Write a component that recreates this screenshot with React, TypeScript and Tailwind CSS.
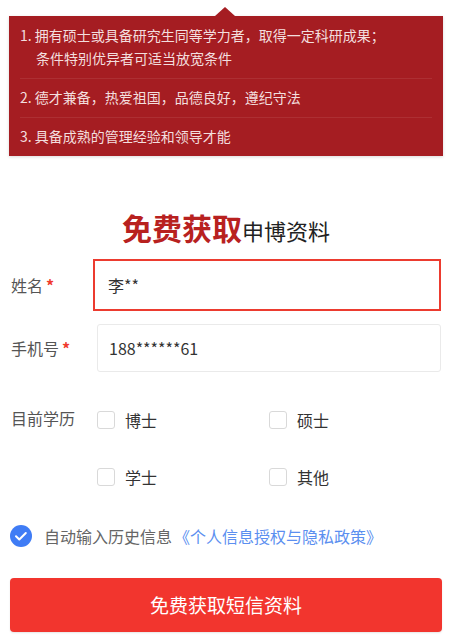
import { useState } from "react";

const font = { fontFamily: '"Noto Sans CJK SC", "Noto Sans", sans-serif' };

function Box({ checked }: { checked: boolean }) {
  return (
    <span
      className={
        "w-[18px] h-[18px] rounded-[3px] border " +
        (checked ? "border-[#3d7bf7] bg-[#3d7bf7]" : "border-[#d9d9d9] bg-white")
      }
    />
  );
}

export default function App() {
  const [edu, setEdu] = useState<string[]>([]);
  const toggle = (v: string) =>
    setEdu((e) => (e.includes(v) ? e.filter((x) => x !== v) : [...e, v]));
  const options = ["博士", "硕士", "学士", "其他"];

  return (
    <div className="w-[452px] h-[643px] bg-white overflow-hidden" style={font}>
      <div className="relative mx-[9px] mt-[16px] bg-[#a51d22] text-[14px] leading-[23px] text-[#f3dede] px-[11px] shadow-[0_1px_3px_rgba(0,0,0,0.15)]">
        <div className="absolute -top-[9px] left-[206px] w-0 h-0 border-l-[10px] border-r-[10px] border-b-[9px] border-l-transparent border-r-transparent border-b-[#a51d22]" />
        <div className="pt-[8px] pb-[8px] border-b border-[#ad2f33]">
          <div>1. 拥有硕士或具备研究生同等学力者，取得一定科研成果；</div>
          <div className="pl-[16px]">条件特别优异者可适当放宽条件</div>
        </div>
        <div className="pt-[7px] pb-[8px] border-b border-[#ad2f33]">
          2. 德才兼备，热爱祖国，品德良好，遵纪守法
        </div>
        <div className="pt-[7px] pb-[8px]">3. 具备成熟的管理经验和领导才能</div>
      </div>

      <div className="mt-[51px] flex items-end justify-center h-[40px]">
        <span className="text-[30px] leading-[40px] font-bold text-[#b8211f]">免费获取</span>
        <span className="text-[22px] leading-[34px] text-[#222]">申博资料</span>
      </div>

      <div className="px-[11px] mt-[12px]">
        <div className="flex items-center">
          <div className="w-[82px] text-[16px] text-[#555]">
            姓名<span className="ml-[3px] text-[#f03a2e] font-bold">*</span>
          </div>
          <div className="flex-1 h-[52px] border-2 border-[#ec3b2f] flex items-center pl-[13px] text-[16px] text-[#333]">
            李**
          </div>
        </div>
        <div className="flex items-center mt-[13px]">
          <div className="w-[86px] text-[16px] text-[#555]">
            手机号<span className="ml-[3px] text-[#f03a2e] font-bold">*</span>
          </div>
          <div className="flex-1 h-[48px] border border-[#eaeaea] rounded-[3px] flex items-center pl-[11px] text-[16px] text-[#333]">
            188******61
          </div>
        </div>

        <div className="flex mt-[36px]">
          <div className="w-[86px] text-[16px] text-[#555] leading-[24px] -mt-[2px]">目前学历</div>
          <div className="flex-1 grid grid-cols-2 gap-y-[33px]">
            {options.map((o) => (
              <button
                key={o}
                onClick={() => toggle(o)}
                className="flex items-center gap-[10px] h-[24px] text-[16px] text-[#333]"
              >
                <Box checked={edu.includes(o)} />
                <span>{o}</span>
              </button>
            ))}
          </div>
        </div>
      </div>

      <div className="flex items-center mt-[35px] px-[10px]">
        <svg width="22" height="22" viewBox="0 0 22 22">
          <circle cx="11" cy="11" r="11" fill="#3f7cf5" />
          <path d="M6 11.2l3.3 3.3 6.5-6.5" stroke="#fff" strokeWidth="2" fill="none" strokeLinecap="round" strokeLinejoin="round" />
        </svg>
        <span className="ml-[12px] text-[16px] text-[#666]">自动输入历史信息</span>
        <span className="ml-[2px] text-[16px] text-[#5b8ff0]">《个人信息授权与隐私政策》</span>
      </div>

      <div className="px-[10px] mt-[30px]">
        <button className="w-full h-[54px] rounded-[4px] bg-[#f2352e] text-white text-[19px] shadow-[0_1px_2px_rgba(0,0,0,0.1)]">
          免费获取短信资料
        </button>
      </div>
    </div>
  );
}
